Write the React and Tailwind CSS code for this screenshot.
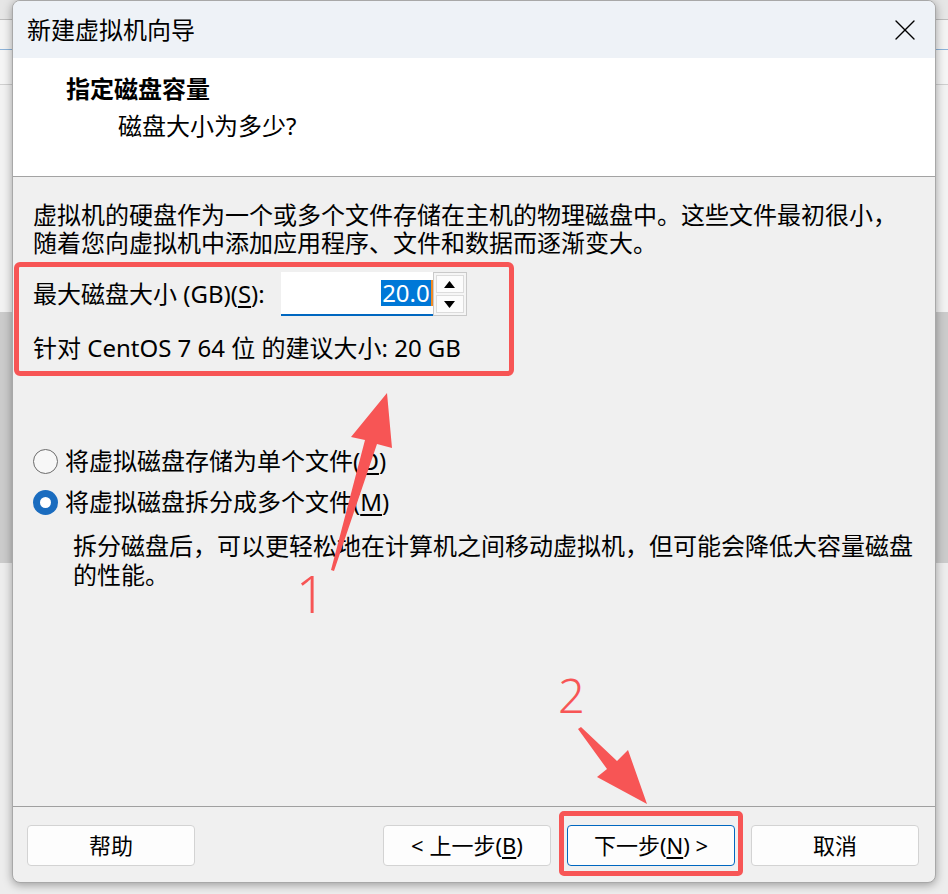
import { X } from 'lucide-react';

const font = { fontFamily: '"Noto Sans", "Noto Sans CJK SC", sans-serif' };

const Radio = ({ checked }) =>
  checked ? (
    <span className="w-[25px] h-[25px] rounded-full bg-[#1a6cbf] flex items-center justify-center shrink-0">
      <span className="w-[11px] h-[11px] rounded-full bg-white" />
    </span>
  ) : (
    <span className="w-[25px] h-[25px] rounded-full border-[1.5px] border-[#6b6b6b] bg-[#f7f7f7] shrink-0" />
  );

const Btn = ({ children, primary }) => (
  <button
    className={`w-[168px] h-[41px] rounded-[4px] bg-[#fdfdfd] text-[22px] text-black flex items-center justify-center ${
      primary ? 'border border-[#0067c0]' : 'border border-[#d3d3d3]'
    }`}
  >
    {children}
  </button>
);

export default function App() {
  return (
    <div className="relative w-[948px] h-[894px] overflow-hidden bg-[#f4f4f4]" style={font}>
      {/* desktop behind the dialog */}
      <div className="flex flex-col">
        <div className="h-[20px] bg-[#e6e6e6] border-b border-[#bdbdbd]" />
        <div className="h-[30px] bg-[#f3f3f3] border-b border-[#8db3d9]" />
        <div className="h-[35px] bg-[#f5f5f5] border-b border-[#cfcfcf]" />
        <div className="h-[227px] bg-[#f2f2f2]" />
        <div className="h-[251px] bg-[#cbcbcb]" />
        <div className="h-[331px] bg-[#ededed]" />
      </div>

      {/* dialog window */}
      <div className="absolute left-[12px] top-0 w-[924px] h-[883px] rounded-[8px] border border-[#a8a8a8] bg-[#f0f0f0] overflow-hidden flex flex-col shadow-[0_2px_10px_rgba(0,0,0,0.35)]">
        <div className="h-[57px] shrink-0 bg-[#eef2f7] flex items-center justify-between pl-[14px] pr-[12px]">
          <span className="text-[24px] text-black">新建虚拟机向导</span>
          <X size={36} strokeWidth={0.9} className="text-black" />
        </div>

        <div className="h-[119px] shrink-0 bg-white border-b border-[#a3a3a3] pl-[53px] pt-[15px] flex flex-col">
          <span className="text-[24px] leading-[32px] font-bold text-black">指定磁盘容量</span>
          <span className="text-[24px] leading-[32px] text-black pl-[52px] mt-[5px]">磁盘大小为多少?</span>
        </div>

        <div className="flex-1 pl-[20px] pt-[24px] flex flex-col">
          <p className="text-[24px] leading-[28px] text-black whitespace-nowrap">
            虚拟机的硬盘作为一个或多个文件存储在主机的物理磁盘中。这些文件最初很小，
            <br />
            随着您向虚拟机中添加应用程序、文件和数据而逐渐变大。
          </p>

          <div className="ml-[-19px] mt-[5px] w-[500px] h-[114px] border-[5px] border-[#f75555] rounded-[6px] pl-[14px] pt-[5px] flex flex-col">
            <div className="flex items-center h-[44px]">
              <span className="text-[24px] text-black whitespace-nowrap">
                最大磁盘大小 (GB)(<span className="underline underline-offset-[3px]">S</span>):
              </span>
              <div className="ml-[16px] w-[152px] h-[44px] bg-white border-b-2 border-[#0067c0] flex items-center justify-end">
                <span className="bg-[#0078d7] text-white text-[24px] leading-[26px] px-[1px]">20.0</span>
                <span className="w-[2px] h-[26px] bg-[#f08a24]" />
              </div>
              <div className="w-[34px] h-[44px] border border-[#c9c9c9] bg-[#f5f5f5] flex flex-col p-[2px] gap-[2px]">
                <div className="flex-1 bg-[#fcfcfc] border border-[#dcdcdc] flex items-center justify-center">
                  <svg width="11" height="7" viewBox="0 0 11 7"><path d="M5.5 0 L11 7 L0 7 Z" fill="#000" /></svg>
                </div>
                <div className="flex-1 bg-[#fcfcfc] border border-[#dcdcdc] flex items-center justify-center">
                  <svg width="11" height="7" viewBox="0 0 11 7"><path d="M0 0 L11 0 L5.5 7 Z" fill="#000" /></svg>
                </div>
              </div>
            </div>
            <span className="mt-[18px] text-[24px] leading-[28px] text-black whitespace-nowrap">
              针对 CentOS 7 64 位 的建议大小: 20 GB
            </span>
          </div>

          <div className="mt-[71px] flex items-center gap-[7px]">
            <Radio />
            <span className="text-[24px] leading-[28px] text-black whitespace-nowrap">
              将虚拟磁盘存储为单个文件(<span className="underline underline-offset-[3px]">O</span>)
            </span>
          </div>
          <div className="mt-[13px] flex items-center gap-[7px]">
            <Radio checked />
            <span className="text-[24px] leading-[28px] text-black whitespace-nowrap">
              将虚拟磁盘拆分成多个文件(<span className="underline underline-offset-[3px]">M</span>)
            </span>
          </div>
          <p className="mt-[15px] pl-[40px] text-[24px] leading-[29px] text-black whitespace-nowrap">
            拆分磁盘后，可以更轻松地在计算机之间移动虚拟机，但可能会降低大容量磁盘
            <br />
            的性能。
          </p>
        </div>

        <div className="h-[76px] shrink-0 border-t border-[#a0a0a0] flex items-start pt-[18px] pl-[14px] pr-[16px]">
          <Btn>帮助</Btn>
          <div className="flex-1" />
          <div className="flex gap-[16px]">
            <Btn>
              &lt; 上一步(<span className="underline underline-offset-[3px]">B</span>)
            </Btn>
            <div className="relative">
              <Btn primary>
                下一步(<span className="underline underline-offset-[3px]">N</span>) &gt;
              </Btn>
              <div className="absolute left-[-8px] right-[-8px] top-[-14px] bottom-[-10px] border-[5px] border-[#f75555] rounded-[5px] pointer-events-none" />
            </div>
            <Btn>取消</Btn>
          </div>
        </div>
      </div>

      {/* annotations */}
      <svg className="absolute inset-0 pointer-events-none" width="948" height="894">
        <polygon
          points="387,393 392,448 377,444 334,571 331,570 365,440 351,437"
          fill="#f75555"
        />
        <polygon
          points="647,804 597,777 607,769 578,729 581,727 617,761 628,750"
          fill="#f75555"
        />
      </svg>
      <span className="absolute left-[296px] top-[563px] text-[52px] leading-[60px] font-light text-[#f75555]">1</span>
      <span className="absolute left-[558px] top-[667px] text-[47px] leading-[56px] font-light text-[#f75555]">2</span>
    </div>
  );
}
